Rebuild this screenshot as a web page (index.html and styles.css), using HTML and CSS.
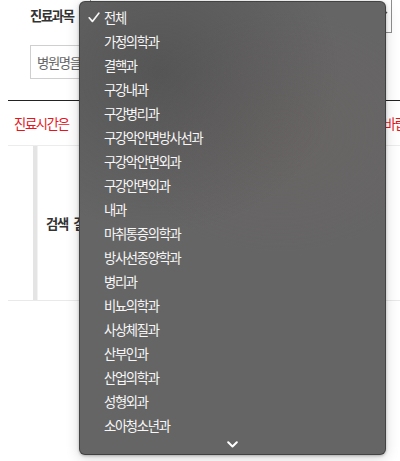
FILE: index.html
```html
<!DOCTYPE html>
<html lang="ko">
<head>
<meta charset="utf-8">
<title>진료과목</title>
<link rel="stylesheet" href="styles.css">
</head>
<body>
<div class="page">
  <div class="filters">
    <div class="filter-row">
      <span class="label">진료과목</span>
      <div class="select">
        <span class="select-value">전체</span>
        <svg class="select-arrow" width="10" height="6" viewBox="0 0 10 6"><polyline points="1,1 5,5 9,1" fill="none" stroke="#555" stroke-width="1.4"/></svg>
      </div>
    </div>
    <div class="search-row">
      <div class="search-input">병원명을 입력하세요</div>
    </div>
  </div>
  <div class="notice"><span class="notice-lead">진료시간은</span> 병원 사정에 따라 변경될 수 있으니 방문 전 반드시 확인 바랍니다.</div>
  <div class="result-table">
    <div class="result-cell">
      <span class="empty">검색 결과가 없습니다.</span>
    </div>
  </div>

  <div class="menu">
    <ul class="menu-list">
      <li class="menu-item selected"><svg class="check" width="12" height="11" viewBox="0 0 12 11"><polyline points="1.2,5.8 4.4,9.4 10.8,1.2" fill="none" stroke="#f6f6f6" stroke-width="1.7" stroke-linecap="round" stroke-linejoin="round"/></svg>전체</li>
      <li class="menu-item">가정의학과</li>
      <li class="menu-item">결핵과</li>
      <li class="menu-item">구강내과</li>
      <li class="menu-item">구강병리과</li>
      <li class="menu-item">구강악안면방사선과</li>
      <li class="menu-item">구강악안면외과</li>
      <li class="menu-item">구강안면외과</li>
      <li class="menu-item">내과</li>
      <li class="menu-item">마취통증의학과</li>
      <li class="menu-item">방사선종양학과</li>
      <li class="menu-item">병리과</li>
      <li class="menu-item">비뇨의학과</li>
      <li class="menu-item">사상체질과</li>
      <li class="menu-item">산부인과</li>
      <li class="menu-item">산업의학과</li>
      <li class="menu-item">성형외과</li>
      <li class="menu-item">소아청소년과</li>
    </ul>
    <div class="menu-more">
      <svg width="11" height="7" viewBox="0 0 11 7"><polyline points="1.2,1.2 5.5,5.5 9.8,1.2" fill="none" stroke="#ffffff" stroke-width="2" stroke-linecap="round" stroke-linejoin="round"/></svg>
    </div>
  </div>
</div>
</body>
</html>
```
FILE: styles.css
```css
html, body {
  margin: 0;
  padding: 0;
  background: #ffffff;
}
body {
  font-family: "Noto Sans CJK KR", "Noto Sans", sans-serif;
  color: #333;
}
.page {
  position: relative;
  width: 400px;
  height: 461px;
  overflow: hidden;
  background: #fff;
}
.filters {
  height: 102px;
  border-bottom: 1px solid #222;
  margin-left: 8px;
  padding: 0 8px 0 22px;
  box-sizing: border-box;
}
.filter-row {
  display: flex;
  align-items: center;
  height: 33px;
  margin-top: -1px;
}
.label {
  font-size: 13.3px;
  font-weight: 700;
  letter-spacing: -1.3px;
  color: #333;
  width: 60px;
  flex: none;
}
.select {
  flex: 1;
  height: 34px;
  box-sizing: border-box;
  border: 1px solid #8f8f8f;
  display: flex;
  align-items: center;
  justify-content: space-between;
  padding: 0 3px 0 10px;
  font-size: 13px;
}
.select-arrow {
  margin-top: -4px;
}
.search-row {
  margin-top: 13px;
  padding-right: 12px;
}
.search-input {
  height: 34px;
  box-sizing: border-box;
  border: 1px solid #cfcfcf;
  display: flex;
  align-items: center;
  padding-left: 6px;
  font-size: 13.3px;
  letter-spacing: -1.3px;
  color: #666;
}
.notice {
  margin-left: 8px;
  height: 45px;
  box-sizing: border-box;
  padding-left: 6px;
  display: flex;
  align-items: center;
  white-space: pre;
  font-size: 13.3px;
  letter-spacing: -1.3px;
  word-spacing: 4px;
  color: #e8131b;
  border-bottom: 1px solid #ececec;
}
.notice-lead {
  margin-right: 4px;
}
.result-table {
  margin-left: 8px;
  height: 155px;
  box-sizing: border-box;
  padding-left: 25px;
  border-bottom: 1px solid #e9e9e9;
}
.result-cell {
  height: 100%;
  border-left: 4px solid #e4e4e4;
  box-shadow: inset 1px 0 0 #f2f2f2;
  display: flex;
  align-items: center;
  padding-left: 9px;
}
.empty {
  font-size: 13.3px;
  font-weight: 700;
  letter-spacing: -1.3px;
  word-spacing: 3px;
  color: #333;
}
.menu {
  position: absolute;
  left: 79px;
  top: 1px;
  width: 307px;
  height: 454px;
  box-sizing: border-box;
  border-radius: 6px;
  border: 1px solid rgba(40, 40, 40, 0.55);
  background:
    radial-gradient(ellipse 180px 160px at 80px 70px, rgba(70, 70, 70, 0.5), rgba(70, 70, 70, 0) 100%),
    radial-gradient(ellipse 160px 120px at 200px 130px, rgba(110, 100, 100, 0.35), rgba(110, 100, 100, 0) 100%),
    #666565;
  box-shadow: 0 3px 14px rgba(0, 0, 0, 0.16), 0 1px 3px rgba(0, 0, 0, 0.25);
  color: #f7f7f7;
  display: flex;
  flex-direction: column;
}
.menu-list {
  list-style: none;
  margin: 0;
  padding: 3px 0 0 0;
}
.menu-item {
  height: 24px;
  display: flex;
  align-items: center;
  padding-left: 24px;
  font-size: 13.3px;
  letter-spacing: -1.3px;
  position: relative;
}
.check {
  position: absolute;
  left: 8px;
  top: 7px;
}
.menu-more {
  flex: 1;
  display: flex;
  justify-content: center;
  align-items: flex-start;
  padding-top: 4px;
}
```
